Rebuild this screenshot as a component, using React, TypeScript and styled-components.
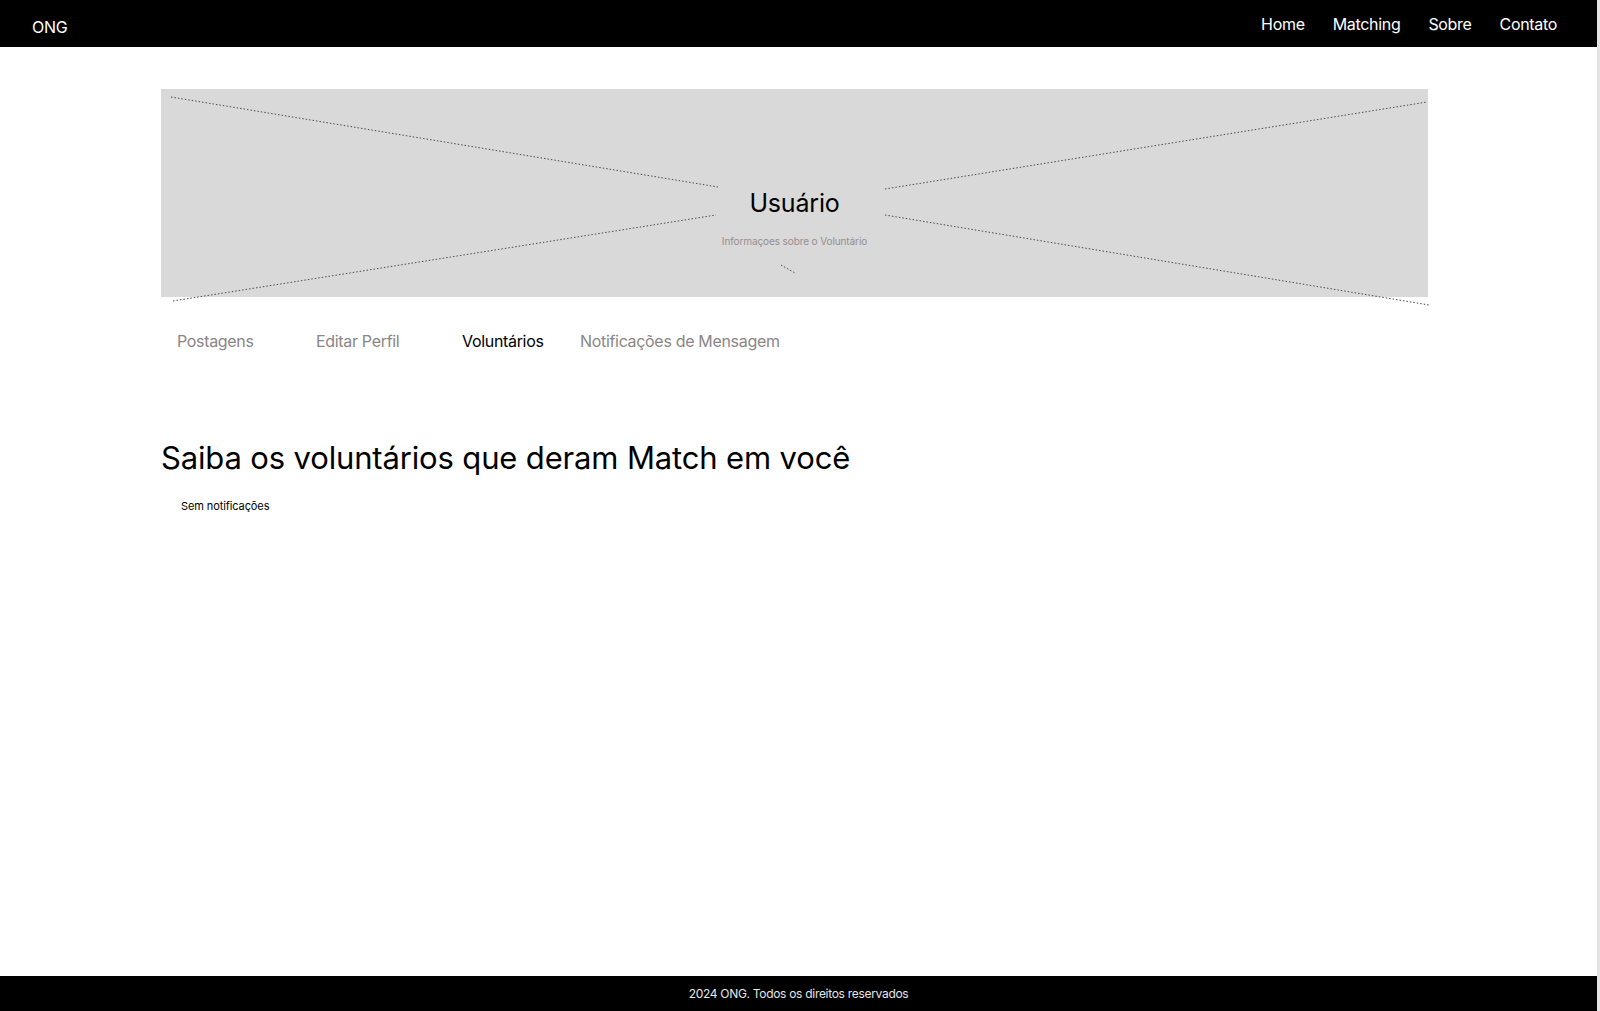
import React from "react";
import styled, { createGlobalStyle } from "styled-components";

const GlobalStyle = createGlobalStyle`
  html { background: #e3e3e3; }
  body {
    margin: 0 3px 0 0;
    background: #ffffff;
    font-family: Inter, "Noto Sans", sans-serif;
    letter-spacing: -0.02em;
    color: #000;
  }
  * { box-sizing: border-box; }
`;

const Page = styled.div`
  min-height: 100vh;
  display: flex;
  flex-direction: column;
`;

const Header = styled.header`
  height: 47px;
  background: #000;
  display: flex;
  align-items: flex-start;
  justify-content: space-between;
  padding: 0 40px 0 32px;
`;

const Logo = styled.div`
  color: #fff;
  font-size: 16px;
  line-height: 20px;
  margin-top: 17px;
`;

const Nav = styled.nav`
  display: flex;
  gap: 28px;
  margin-top: 14px;
`;

const NavLink = styled.a`
  color: #fff;
  font-size: 16px;
  line-height: 20px;
  letter-spacing: -0.02em;
  text-decoration: none;
`;

const Main = styled.main`
  flex: 1;
  padding: 42px 0 0 161px;
`;

const Container = styled.div`
  width: 1267px;
`;

const Banner = styled.section`
  position: relative;
  height: 208px;
  background: #d9d9d9;
  padding-top: 99px;
  text-align: center;
`;

const Overlay = styled.svg`
  position: absolute;
  left: 0;
  top: 0;
  overflow: visible;
  pointer-events: none;
`;

const BannerTitle = styled.h1`
  position: relative;
  margin: 0;
  font-size: 25px;
  font-weight: 400;
  line-height: 30px;
  letter-spacing: -0.2px;
  color: #000;
`;

const BannerSubtitle = styled.p`
  position: relative;
  margin: 16px 0 0;
  font-size: 10px;
  line-height: 14px;
  letter-spacing: -0.1px;
  color: #958e8e;
`;

const Tabs = styled.div`
  display: flex;
  margin-top: 34px;
`;

const Tab = styled.button<{ $w?: number; $active?: boolean }>`
  width: ${(p) => (p.$w ? `${p.$w}px` : "auto")};
  padding: 0 0 0 16px;
  margin: 0;
  border: none;
  background: none;
  text-align: left;
  font-family: Inter, "Noto Sans", sans-serif;
  font-size: 16px;
  line-height: 20px;
  letter-spacing: -0.02em;
  color: ${(p) => (p.$active ? "#000" : "#8b8585")};
  cursor: pointer;
`;

const Heading = styled.h2`
  margin: 87px 0 0;
  font-size: 31px;
  font-weight: 400;
  line-height: 40px;
  letter-spacing: -0.15px;
  color: #000;
`;

const Empty = styled.p`
  margin: 20px 0 0;
  padding-left: 20px;
  font-size: 11px;
  line-height: 16px;
  letter-spacing: -0.1px;
  color: #000;
`;

const Footer = styled.footer`
  height: 35px;
  background: #000;
  color: #e6e6e6;
  font-size: 12px;
  letter-spacing: -0.3px;
  display: flex;
  align-items: center;
  justify-content: center;
  padding-bottom: 1px;
`;

const Dotted = ({ x1, y1, x2, y2 }: { x1: number; y1: number; x2: number; y2: number }) => (
  <line x1={x1} y1={y1} x2={x2} y2={y2} stroke="#4a4a4a" strokeWidth={1} strokeDasharray="1.5 2" />
);

export default function App() {
  const tabs = [
    { label: "Postagens", w: 139 },
    { label: "Editar Perfil", w: 146 },
    { label: "Voluntários", w: 118, active: true },
    { label: "Notificações de Mensagem" },
  ];
  return (
    <>
      <GlobalStyle />
      <Page>
        <Header>
          <Logo>ONG</Logo>
          <Nav>
            <NavLink href="#">Home</NavLink>
            <NavLink href="#">Matching</NavLink>
            <NavLink href="#">Sobre</NavLink>
            <NavLink href="#">Contato</NavLink>
          </Nav>
        </Header>
        <Main>
          <Container>
            <Banner>
              <Overlay width="1267" height="208" viewBox="0 0 1267 208">
                <Dotted x1={10} y1={8} x2={557} y2={98} />
                <Dotted x1={12} y1={212} x2={555} y2={126} />
                <Dotted x1={724} y1={100} x2={1266} y2={13} />
                <Dotted x1={724} y1={126} x2={1268} y2={216} />
                <Dotted x1={620} y1={176} x2={634} y2={184} />
              </Overlay>
              <BannerTitle>Usuário</BannerTitle>
              <BannerSubtitle>Informaçoes sobre o Voluntário</BannerSubtitle>
            </Banner>
            <Tabs>
              {tabs.map((t) => (
                <Tab key={t.label} $w={t.w} $active={t.active}>
                  {t.label}
                </Tab>
              ))}
            </Tabs>
            <Heading>Saiba os voluntários que deram Match em você</Heading>
            <Empty>Sem notificações</Empty>
          </Container>
        </Main>
        <Footer>2024 ONG. Todos os direitos reservados</Footer>
      </Page>
    </>
  );
}
